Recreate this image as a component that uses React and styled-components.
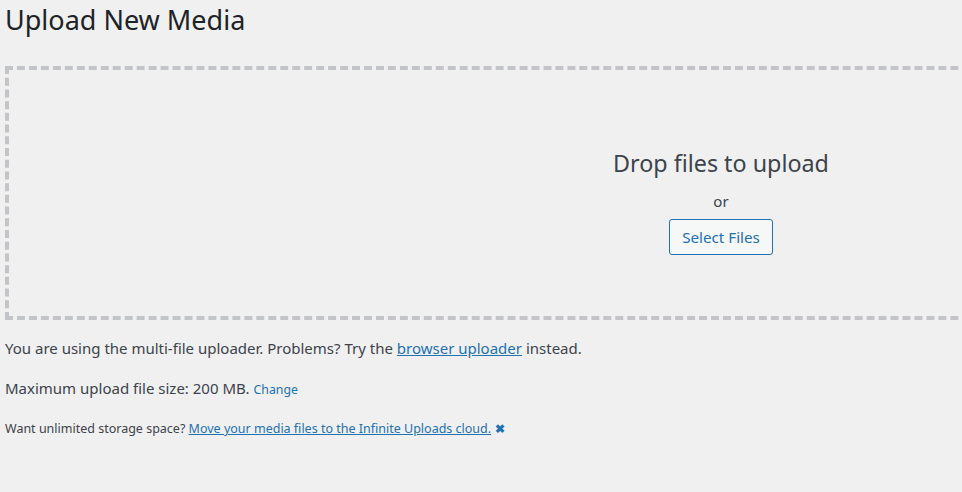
import React from 'react';
import styled, { createGlobalStyle } from 'styled-components';

const GlobalStyle = createGlobalStyle`
html, body {
  margin: 0;
  padding: 0;
  overflow: hidden;
  background: #f0f0f1;
}
body {
  font-family: "Noto Sans", "Open Sans", sans-serif;
  color: #3c434a;
}
`

const Wrap = styled.div`
padding: 0 5px;
width: 1450px;
`

const Title = styled.h1`
font-size: 27px;
font-weight: 400;
line-height: 34px;
margin: 0;
padding: 3px 0 29px;
color: #1d2327;
`

const DropZone = styled.div`
width: 1432px;
height: 254px;
border: 4px dashed #c3c4c7;
display: flex;
flex-direction: column;
align-items: center;
padding-top: 78px;
box-sizing: border-box;
`

const DropInfo = styled.p`
margin: 0;
font-size: 23.3px;
line-height: 30px;
`

const Or = styled.p`
margin: 12px 0 7px;
font-size: 15px;
line-height: 22px;
`

const SelectButton = styled.button`
font-family: inherit;
font-size: 15.2px;
color: #2271b1;
background: #f6f7f7;
border: 1px solid #2271b1;
border-radius: 3px;
height: 36px;
padding: 0 12px;
cursor: pointer;
`

const Text = styled.p`
margin: 0;
font-size: ${props => props.small ? '12.5px' : '15px'};
line-height: 20px;
padding-top: ${props => props.gap}px;
`

const Link = styled.a`
color: #2271b1;
font-size: ${props => props.small ? '12.3px' : 'inherit'};
text-decoration: ${props => props.plain ? 'none' : 'underline'};
`

const Dismiss = styled.span`
display: inline-block;
color: #2271b1;
font-weight: 700;
margin-left: 4px;
font-size: 12px;
`

const App = () => {
    return (
        <>
            <GlobalStyle />
            <Wrap>
                <Title>Upload New Media</Title>
                <DropZone>
                    <DropInfo>Drop files to upload</DropInfo>
                    <Or>or</Or>
                    <SelectButton>Select Files</SelectButton>
                </DropZone>
                <Text gap={18}>
                    You are using the multi-file uploader. Problems? Try the <Link href="#">browser uploader</Link> instead.
                </Text>
                <Text gap={20}>
                    Maximum upload file size: 200 MB. <Link href="#" plain small>Change</Link>
                </Text>
                <Text gap={19} small>
                    Want unlimited storage space? <Link href="#">Move your media files to the Infinite Uploads cloud.</Link>
                    <Dismiss>✖</Dismiss>
                </Text>
            </Wrap>
        </>
    )
}

export default App;
